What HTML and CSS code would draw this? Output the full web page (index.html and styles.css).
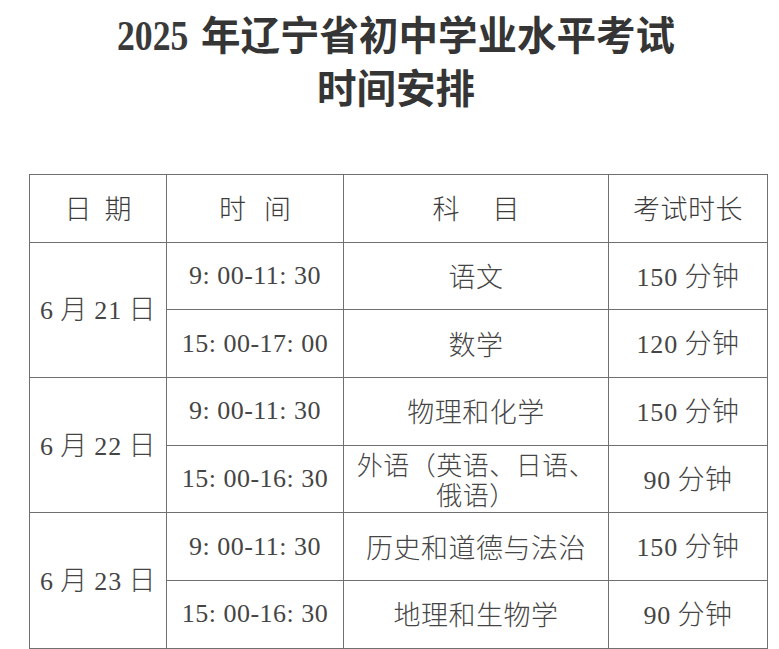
FILE: index.html
```html
<!DOCTYPE html>
<html lang="zh-CN">
<head>
<meta charset="utf-8">
<title>2025年辽宁省初中学业水平考试时间安排</title>
<link rel="stylesheet" href="styles.css">
</head>
<body>
<div class="page">
  <h1 class="title">
    <span class="title-line"><span class="year">2025</span> 年辽宁省初中学业水平考试</span>
    <span class="title-line">时间安排</span>
  </h1>
  <table class="schedule">
    <colgroup>
      <col class="c-date">
      <col class="c-time">
      <col class="c-subject">
      <col class="c-dur">
    </colgroup>
    <thead>
      <tr>
        <th><span class="sp-date">日期</span></th>
        <th><span class="sp-time">时间</span></th>
        <th><span class="sp-subj">科目</span></th>
        <th>考试时长</th>
      </tr>
    </thead>
    <tbody>
      <tr>
        <td rowspan="2" class="date"><span class="num">6</span> 月 <span class="num">21</span> 日</td>
        <td class="time">9: 00-11: 30</td>
        <td>语文</td>
        <td><span class="num">150</span> 分钟</td>
      </tr>
      <tr>
        <td class="time">15: 00-17: 00</td>
        <td>数学</td>
        <td><span class="num">120</span> 分钟</td>
      </tr>
      <tr>
        <td rowspan="2" class="date"><span class="num">6</span> 月 <span class="num">22</span> 日</td>
        <td class="time">9: 00-11: 30</td>
        <td>物理和化学</td>
        <td><span class="num">150</span> 分钟</td>
      </tr>
      <tr>
        <td class="time">15: 00-16: 30</td>
        <td class="two-line">外语（英语、日语、<br>俄语）</td>
        <td><span class="num">90</span> 分钟</td>
      </tr>
      <tr>
        <td rowspan="2" class="date"><span class="num">6</span> 月 <span class="num">23</span> 日</td>
        <td class="time">9: 00-11: 30</td>
        <td>历史和道德与法治</td>
        <td><span class="num">150</span> 分钟</td>
      </tr>
      <tr>
        <td class="time">15: 00-16: 30</td>
        <td>地理和生物学</td>
        <td><span class="num">90</span> 分钟</td>
      </tr>
    </tbody>
  </table>
</div>
</body>
</html>
```
FILE: styles.css
```css
html, body {
  margin: 0;
  padding: 0;
  background: #ffffff;
}

.page {
  width: 779px;
  height: 649px;
  overflow: hidden;
}

.title {
  margin: 9px 0 0 0;
  padding-left: 13px;
  text-align: center;
  font-family: "Liberation Serif", "Noto Sans CJK SC", serif;
  font-weight: 700;
  font-size: 39.5px;
  line-height: 53px;
  color: #353535;
}

.title-line {
  display: block;
}

.year {
  display: inline-block;
  font-family: "Liberation Serif", serif;
  font-weight: 700;
  font-size: 43px;
  line-height: 53px;
  transform: scaleX(0.83);
  transform-origin: left center;
  margin-right: -12px;
  color: #3a3a3a;
}

.schedule {
  margin: 57px 0 0 29px;
  width: 738px;
  border-collapse: collapse;
  table-layout: fixed;
  font-family: "Noto Sans CJK SC", sans-serif;
  font-weight: 300;
  font-size: 27px;
  color: #454545;
}

.c-date { width: 137px; }
.c-time { width: 177px; }
.c-subject { width: 265px; }
.c-dur { width: 159px; }

.schedule tr {
  height: 67.7px;
}

.schedule th,
.schedule td {
  border: 1.5px solid #707070;
  padding: 0;
  text-align: center;
  vertical-align: middle;
  font-weight: 300;
  line-height: 30px;
  letter-spacing: 0.5px;
  white-space: nowrap;
}

.schedule th {
  color: #3c3c3c;
}

.sp-date { letter-spacing: 13px; margin-right: -13px; }
.sp-time { letter-spacing: 18px; margin-right: -18px; }
.sp-subj { letter-spacing: 33px; margin-right: -33px; }

.num,
.time {
  font-family: "Liberation Serif", serif;
  font-size: 26px;
}

.num {
  letter-spacing: 0.8px;
}

.time {
  letter-spacing: 1.2px;
  color: #454545;
}

.date {
  padding-bottom: 8px;
}

.two-line {
  font-size: 26px;
  line-height: 28px;
  letter-spacing: 0;
}
```
